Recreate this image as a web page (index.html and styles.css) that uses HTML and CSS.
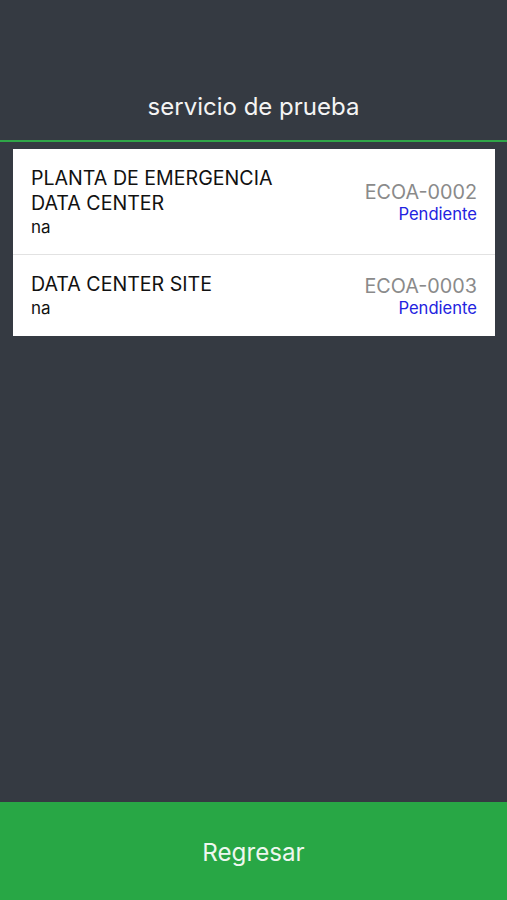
FILE: index.html
```html
<!DOCTYPE html>
<html lang="es">
<head>
<meta charset="utf-8">
<link rel="stylesheet" href="styles.css">
</head>
<body>
<div class="screen">
  <header class="header">
    <h1 class="title">servicio de prueba</h1>
  </header>
  <main class="content">
    <ul class="list">
      <li class="row">
        <div class="info">
          <div class="name">PLANTA DE EMERGENCIA<br>DATA CENTER</div>
          <div class="sub">na</div>
        </div>
        <div class="meta">
          <div class="code">ECOA-0002</div>
          <div class="status">Pendiente</div>
        </div>
      </li>
      <li class="row">
        <div class="info">
          <div class="name">DATA CENTER SITE</div>
          <div class="sub">na</div>
        </div>
        <div class="meta">
          <div class="code">ECOA-0003</div>
          <div class="status">Pendiente</div>
        </div>
      </li>
    </ul>
  </main>
  <footer class="footer">
    <button class="back">Regresar</button>
  </footer>
</div>
</body>
</html>
```

FILE: styles.css
```css
* { box-sizing: border-box; }
html, body { margin: 0; padding: 0; }
body {
  font-family: Inter, "Noto Sans", sans-serif;
  background: #353a42;
}
.screen {
  width: 507px;
  height: 900px;
  display: flex;
  flex-direction: column;
  background: #353a42;
}
.header {
  height: 142px;
  display: flex;
  align-items: flex-end;
  justify-content: center;
  padding-bottom: 19px;
  border-bottom: 2px solid #2fa648;
}
.title {
  margin: 0;
  font-size: 24px;
  font-weight: 400;
  color: #f4f4f4;
}
.content {
  flex: 1;
  padding: 7px 12px 0 13px;
}
.list {
  list-style: none;
  margin: 0;
  padding: 0;
  background: #fff;
}
.row {
  display: flex;
  justify-content: space-between;
  align-items: center;
  padding: 0 18px;
  border-bottom: 1px solid #e2e2e2;
}
.row:first-child { height: 106px; }
.row:last-child { height: 81px; border-bottom: none; }
.name {
  font-size: 19.6px;
  line-height: 25px;
  color: #111;
}
.sub {
  font-size: 17px;
  line-height: 22px;
  color: #111;
}
.meta { text-align: right; }
.code {
  font-size: 19.8px;
  line-height: 24px;
  color: #8a8a8a;
}
.status {
  font-size: 16.6px;
  line-height: 20px;
  color: #2323e0;
}
.footer {
  height: 98px;
  background: #28a745;
  display: flex;
}
.back {
  flex: 1;
  border: none;
  background: transparent;
  color: #eef7ef;
  font-family: inherit;
  font-size: 24.2px;
  padding: 3px 0 0;
}
```
